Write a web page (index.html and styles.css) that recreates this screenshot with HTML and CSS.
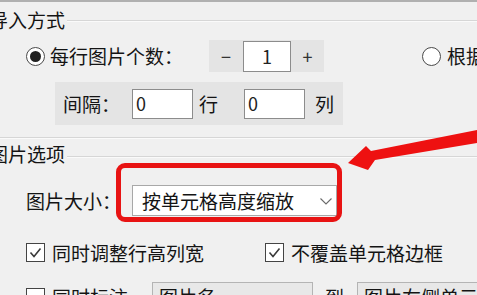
FILE: index.html
```html
<!DOCTYPE html>
<html lang="zh-CN">
<head>
<meta charset="utf-8">
<link rel="stylesheet" href="styles.css">
</head>
<body>
<div class="page">
  <div class="top-rule"></div>

  <section class="group group-import">
    <div class="legend"><span class="legend-text">导入方式</span><span class="legend-line"></span></div>

    <div class="row row-count">
      <span class="radio checked"><span class="dot"></span></span>
      <span class="label label-count">每行图片个数：</span>
      <div class="spinner">
        <span class="spin-btn minus">−</span>
        <span class="input input-center">1</span>
        <span class="spin-btn plus">+</span>
      </div>
      <span class="radio radio-right"></span>
      <span class="label label-right">根据</span>
    </div>

    <div class="row row-gap">
      <div class="gap-panel">
        <span class="label">间隔：</span>
        <span class="input input-gap input-first">0</span>
        <span class="label unit unit-row">行</span>
        <span class="input input-gap input-second">0</span>
        <span class="label unit unit-col">列</span>
      </div>
    </div>
  </section>

  <section class="group group-options">
    <div class="legend"><span class="legend-text">图片选项</span><span class="legend-line"></span></div>

    <div class="row row-size">
      <span class="label">图片大小：</span>
      <div class="select-wrap">
        <div class="select">
          <span class="select-text">按单元格高度缩放</span>
          <svg class="chevron" width="12" height="7" viewBox="0 0 12 7"><polyline points="0.5,0.5 6,6 11.5,0.5" fill="none" stroke="#6a6a6a" stroke-width="1.1"/></svg>
        </div>
        <div class="highlight"></div>
      </div>
    </div>

    <div class="row row-checks">
      <div class="check-item first">
        <span class="checkbox"><svg width="17" height="17" viewBox="0 0 17 17"><polyline points="3.5,8.5 7,12.5 13.5,4.5" fill="none" stroke="#3a3a3a" stroke-width="1.6"/></svg></span>
        <span class="label">同时调整行高列宽</span>
      </div>
      <div class="check-item">
        <span class="checkbox"><svg width="17" height="17" viewBox="0 0 17 17"><polyline points="3.5,8.5 7,12.5 13.5,4.5" fill="none" stroke="#3a3a3a" stroke-width="1.6"/></svg></span>
        <span class="label">不覆盖单元格边框</span>
      </div>
    </div>

    <div class="row row-note">
      <span class="checkbox"></span>
      <span class="label label-note">同时标注</span>
      <span class="field field-name">图片名</span>
      <span class="label label-to">到</span>
      <span class="field field-target">图片右侧单元格</span>
    </div>
  </section>

  <svg class="arrow" width="477" height="295" viewBox="0 0 477 295">
    <polygon points="348,163 366,146 371,151 477,130 477,143 375,160 368,170" fill="#ee1111"/>
  </svg>
</div>
</body>
</html>
```

FILE: styles.css
```css
html, body {
  margin: 0;
  padding: 0;
}

body {
  background: #f0f0f0;
  font-family: "Noto Sans CJK SC", "Noto Sans", sans-serif;
  font-size: 19px;
  color: #141414;
  width: 477px;
  height: 295px;
  overflow: hidden;
}

.page {
  position: relative;
  width: 477px;
  height: 295px;
  overflow: hidden;
}

.top-rule {
  height: 2px;
  background: #b0b0b0;
}

.label {
  line-height: 20px;
  white-space: nowrap;
}

.legend {
  display: flex;
  align-items: center;
  height: 20px;
}

.legend-text {
  margin-left: -11px;
  line-height: 20px;
  white-space: nowrap;
}

.legend-line {
  flex: 1;
  height: 0;
  border-top: 1px solid #d6d6d6;
  border-bottom: 1px solid #fafafa;
  margin-left: 2px;
  margin-top: 2px;
}

.group-import {
  padding-top: 8px;
  padding-bottom: 12px;
  border-bottom: 1px solid #d6d6d6;
  box-shadow: 0 1px 0 #fafafa;
}

.row {
  display: flex;
  align-items: center;
}

.row-count {
  margin-top: 10px;
  height: 32px;
  padding-left: 26px;
}

.radio {
  width: 17px;
  height: 17px;
  border: 1px solid #4a4a4a;
  border-radius: 50%;
  background: #fff;
  display: flex;
  align-items: center;
  justify-content: center;
  flex: none;
}

.radio .dot {
  width: 11px;
  height: 11px;
  border-radius: 50%;
  background: #222;
}

.label-count {
  margin-left: 5px;
}

.spinner {
  margin-left: 26px;
  width: 115px;
  height: 32px;
  background: #e4e4e4;
  display: flex;
  align-items: center;
  flex: none;
}

.spin-btn {
  width: 34px;
  text-align: center;
  line-height: 20px;
  font-size: 18px;
  color: #333;
}

.spin-btn.plus {
  width: 33px;
}

.input {
  box-sizing: border-box;
  background: #fff;
  border: 1px solid #8c8c8c;
  line-height: 28px;
  font-size: 18px;
  color: #222;
  flex: none;
}

.input-center {
  width: 48px;
  height: 31px;
  text-align: center;
}

.radio-right {
  margin-left: 98px;
}

.label-right {
  margin-left: 6px;
}

.row-gap {
  margin-top: 10px;
}

.gap-panel {
  margin-left: 55px;
  width: 288px;
  height: 43px;
  box-sizing: border-box;
  padding-left: 8px;
  background: #e4e4e4;
  display: flex;
  align-items: center;
}

.input-gap {
  width: 61px;
  height: 30px;
  padding-left: 3px;
  line-height: 27px;
}

.input-first {
  margin-left: 12px;
}

.unit-row {
  margin-left: 6px;
}

.input-second {
  margin-left: 26px;
}

.unit-col {
  margin-left: 10px;
}

.group-options {
  padding-top: 6px;
}

.group-options .legend-line {
  margin-top: 6px;
}

.row-size {
  margin-top: 21px;
  padding-left: 26px;
  height: 31px;
}

.select-wrap {
  position: relative;
  margin-left: 11px;
}

.select {
  box-sizing: border-box;
  width: 205px;
  height: 31px;
  background: #fff;
  border: 1px solid #a8a8a8;
  display: flex;
  align-items: center;
  justify-content: space-between;
  padding-left: 9px;
  padding-right: 4px;
}

.select-text {
  line-height: 20px;
  white-space: nowrap;
}

.chevron {
  margin-top: 2px;
}

.highlight {
  position: absolute;
  left: -16px;
  top: -22px;
  width: 226px;
  height: 59px;
  box-sizing: border-box;
  border: 5px solid #e81313;
  border-radius: 9px;
}

.row-checks {
  margin-top: 27px;
  padding-left: 26px;
  height: 19px;
}

.check-item {
  display: flex;
  align-items: center;
}

.check-item.first {
  width: 239px;
}

.checkbox {
  box-sizing: border-box;
  width: 19px;
  height: 19px;
  border: 1px solid #444;
  background: #fff;
  display: flex;
  align-items: center;
  justify-content: center;
  flex: none;
}

.check-item .label {
  margin-left: 7px;
}

.row-note {
  margin-top: 20px;
  padding-left: 26px;
  height: 30px;
}

.label-note {
  margin-left: 7px;
}

.field {
  box-sizing: border-box;
  height: 30px;
  background: #e8e8e8;
  border: 1px solid #b4b4b4;
  padding-left: 6px;
  line-height: 28px;
  white-space: nowrap;
  flex: none;
}

.field-name {
  margin-left: 24px;
  width: 161px;
}

.label-to {
  margin-left: 12px;
}

.field-target {
  margin-left: 13px;
  width: 140px;
}

.arrow {
  position: absolute;
  left: 0;
  top: 0;
  pointer-events: none;
}
```
